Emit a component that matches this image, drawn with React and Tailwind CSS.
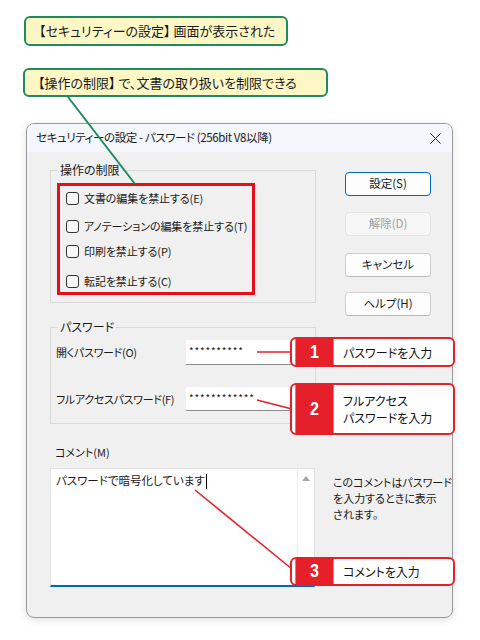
import React from "react";

const F = "font-['Noto_Sans_CJK_JP','Noto_Sans',sans-serif] [font-feature-settings:'palt']";

function Cb({ label, cls }) {
  return (
    <div className={`flex items-center h-[18px] ${cls}`}>
      <span className="w-[13px] h-[13px] border border-[#333333] rounded-[3px] bg-[#f7f7f7] shrink-0" />
      <span className="ml-[5px] text-[11px] leading-[18px] whitespace-nowrap tracking-[-0.1px] text-[#1a1a1a]">{label}</span>
    </div>
  );
}

function Btn({ children, cls, variant }) {
  const v =
    variant === "primary"
      ? "border-[#0067c0] border-[1.5px] bg-[#fdfdfd] text-[#1a1a1a]"
      : variant === "disabled"
      ? "border-[#e3e3e3] bg-[#f6f6f6] text-[#a0a0a0]"
      : "border-[#d0d0d0] border-b-[#b8b8b8] bg-[#fdfdfd] text-[#1a1a1a]";
  return (
    <div className={`w-[86px] h-[24px] rounded-[4px] border flex items-center justify-center text-[11.5px] ${v} ${cls}`}>
      {children}
    </div>
  );
}

function Badge({ n, cls, children }) {
  return (
    <div className={`absolute left-[290px] w-[165px] flex rounded-[6px] border-2 border-[#e5202a] bg-white overflow-hidden ${cls}`}>
      <div className="w-[45px] bg-[#e5202a] flex items-center justify-center text-white text-[19px] font-bold font-['Liberation_Sans',sans-serif] scale-x-[0.85]">
        {n}
      </div>
      <div className="flex-1 flex items-center pl-[6px] text-[12px] leading-[17px] text-[#111111]">{children}</div>
    </div>
  );
}

export default function App() {
  return (
    <div className={`relative w-[480px] h-[640px] bg-white overflow-hidden ${F}`}>
      <div className="flex flex-col">
        <div className="ml-[24px] mt-[16px] w-[264px] h-[30px] rounded-[6px] border-[2.5px] border-[#1f8a5f] bg-[#fdf7c6] flex items-center pl-[13px] text-[13px] text-[#1a1a1a]">
          【セキュリティーの設定】 画面が表示された
        </div>
        <div className="ml-[23px] mt-[22px] w-[305px] h-[29px] rounded-[6px] border-[2.5px] border-[#1f8a5f] bg-[#fdf7c6] flex items-center pl-[13px] text-[13px] text-[#1a1a1a]">
          【操作の制限】 で、文書の取り扱いを制限できる
        </div>

        {/* Dialog */}
        <div className="ml-[26px] mt-[26px] w-[427px] h-[495px] rounded-[8px] border border-[#9a9a9a] bg-[#f0f0f0] overflow-hidden shadow-[0_2px_8px_rgba(0,0,0,0.12)] flex flex-col">
          <div className="h-[28px] bg-[#f3f6fa] flex items-center justify-between pl-[9px] pr-[11px] shrink-0">
            <span className="text-[11.5px] tracking-[-0.4px] whitespace-nowrap text-[#1a1a1a]">セキュリティーの設定 - パスワード (256bit V8以降)</span>
            <svg width="11" height="11" viewBox="0 0 11 11">
              <path d="M0.5 0.5 L10.5 10.5 M10.5 0.5 L0.5 10.5" stroke="#222" strokeWidth="1" />
            </svg>
          </div>
          <div className="flex flex-col pt-[18px] pl-[23px]">
            <div className="flex">
              <div className="flex flex-col w-[266px]">
                {/* 操作の制限 */}
                <div className="relative h-[133px] border border-[#d9d9d9] pt-[12px] pl-[6px]">
                  <span className="absolute left-[7px] -top-[9px] bg-[#f0f0f0] px-[2px] text-[12px] leading-[16px] text-[#1a1a1a]">
                    操作の制限
                  </span>
                  <div className="w-[198px] h-[112px] border-[3px] border-[#e60f19] pl-[6px] flex flex-col">
                    <Cb label="文書の編集を禁止する(E)" cls="mt-[3px]" />
                    <Cb label="アノテーションの編集を禁止する(T)" cls="mt-[10px]" />
                    <Cb label="印刷を禁止する(P)" cls="mt-[7px]" />
                    <Cb label="転記を禁止する(C)" cls="mt-[12px]" />
                  </div>
                </div>
                {/* パスワード */}
                <div className="relative mt-[24px] h-[97px] border border-[#d9d9d9] pt-[12px] pl-[5px] flex flex-col">
                  <span className="absolute left-[7px] -top-[9px] bg-[#f0f0f0] px-[2px] text-[12px] leading-[16px] text-[#1a1a1a]">
                    パスワード
                  </span>
                  <div className="flex items-center h-[25px]">
                    <span className="w-[130px] text-[11px] tracking-[-0.3px] whitespace-nowrap text-[#1a1a1a]">開くパスワード(O)</span>
                    <div className="w-[113px] h-[25px] bg-white border-b border-[#8a8a8a] flex items-start pl-[3px] pt-[3px] text-[10px] tracking-[0.8px] text-[#1a1a1a]">
                      **********
                    </div>
                  </div>
                  <div className="flex items-center h-[24px] mt-[22px]">
                    <span className="w-[130px] text-[11px] tracking-[-0.3px] whitespace-nowrap text-[#1a1a1a]">フルアクセスパスワード(F)</span>
                    <div className="w-[113px] h-[24px] bg-white border-b border-[#8a8a8a] flex items-start pl-[3px] pt-[3px] text-[10px] tracking-[0.8px] text-[#1a1a1a]">
                      ************
                    </div>
                  </div>
                </div>
              </div>
              <div className="flex flex-col ml-[29px] pt-[2px]">
                <Btn variant="primary" cls="">設定(S)</Btn>
                <Btn variant="disabled" cls="mt-[16px]">解除(D)</Btn>
                <Btn cls="mt-[17px]">キャンセル</Btn>
                <Btn cls="mt-[15px]">ヘルプ(H)</Btn>
              </div>
            </div>
            <div className="mt-[20px] ml-[5px] text-[11px] leading-[16px] text-[#1a1a1a]">コメント(M)</div>
            <div className="flex mt-[8px]">
              <div className="w-[265px] h-[119px] bg-white border border-[#e2e2e2] border-b-2 border-b-[#0067c0] flex">
                <div className="flex-1 pl-[5px] pt-[2px] text-[11.5px] leading-[18px] text-[#1a1a1a]">
                  パスワードで暗号化しています
                  <span className="inline-block w-[1px] h-[15px] bg-black align-middle ml-[1px]" />
                </div>
                <div className="w-[17px] border-l border-[#efefef] flex justify-center pt-[7px]">
                  <svg width="8" height="5" viewBox="0 0 8 5">
                    <path d="M4 0 L8 5 L0 5 Z" fill="#a6a6a6" />
                  </svg>
                </div>
              </div>
              <div className="ml-[18px] mt-[6px] text-[11px] leading-[16px] text-[#1a1a1a]">
                このコメントはパスワード
                <br />
                を入力するときに表示
                <br />
                されます。
              </div>
            </div>
          </div>
        </div>
      </div>

      {/* connector lines */}
      <svg className="absolute left-0 top-0 pointer-events-none" width="480" height="640">
        <line x1="68" y1="97" x2="135" y2="184" stroke="#1f8a5f" strokeWidth="2" />
        <line x1="257" y1="352" x2="292" y2="352" stroke="#e5202a" strokeWidth="1.6" />
        <line x1="257" y1="400" x2="292" y2="409" stroke="#e5202a" strokeWidth="1.6" />
        <line x1="195" y1="490" x2="292" y2="569" stroke="#e5202a" strokeWidth="1.6" />
      </svg>

      <Badge n="1" cls="top-[337px] h-[30px]">パスワードを入力</Badge>
      <Badge n="2" cls="top-[383px] h-[52px]">
        <span>
          フルアクセス
          <br />
          パスワードを入力
        </span>
      </Badge>
      <Badge n="3" cls="top-[557px] h-[29px]">コメントを入力</Badge>
    </div>
  );
}
